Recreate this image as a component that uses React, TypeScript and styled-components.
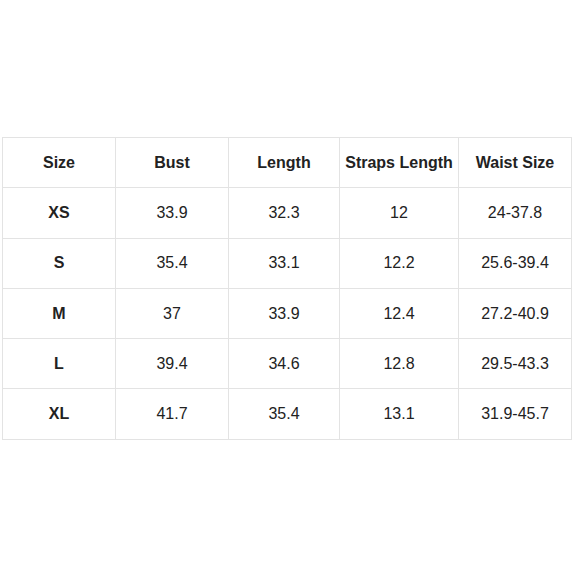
import styled, { createGlobalStyle } from 'styled-components'

const GlobalStyle = createGlobalStyle`
  html, body {
    margin: 0;
    background: #ffffff;
  }
`

const headers = ['Size', 'Bust', 'Length', 'Straps Length', 'Waist Size']
const widths = [113, 113, 111, 119, 113]

const rows = [
  ['XS', '33.9', '32.3', '12', '24-37.8'],
  ['S', '35.4', '33.1', '12.2', '25.6-39.4'],
  ['M', '37', '33.9', '12.4', '27.2-40.9'],
  ['L', '39.4', '34.6', '12.8', '29.5-43.3'],
  ['XL', '41.7', '35.4', '13.1', '31.9-45.7']
]

export default function App() {
  return (
    <Page>
      <GlobalStyle />
      <Table>
        <colgroup>
          {widths.map((w, i) => (
            <col key={i} style={{ width: w }} />
          ))}
        </colgroup>
        <thead>
          <Row>
            {headers.map((h) => (
              <Cell as="th" key={h} bold>
                {h}
              </Cell>
            ))}
          </Row>
        </thead>
        <tbody>
          {rows.map((r) => (
            <Row key={r[0]}>
              {r.map((v, i) => (
                <Cell key={i} bold={i === 0}>
                  {v}
                </Cell>
              ))}
            </Row>
          ))}
        </tbody>
      </Table>
    </Page>
  )
}

const Page = styled.div`
  width: 580px;
  height: 580px;
  box-sizing: border-box;
  padding: 137px 0 0 2px;
  background: #ffffff;
`

const Table = styled.table`
  width: 570px;
  table-layout: fixed;
  border-collapse: collapse;
  font-family: 'Liberation Sans', Arial, sans-serif;
  font-size: 16px;
  color: #222222;
`

const Row = styled.tr`
  height: 50.3px;
`

const Cell = styled.td<{ bold?: boolean }>`
  border: 1px solid #e3e3e3;
  text-align: center;
  vertical-align: middle;
  padding: 0;
  font-weight: ${({ bold }) => (bold ? 700 : 400)};
  white-space: nowrap;
`
